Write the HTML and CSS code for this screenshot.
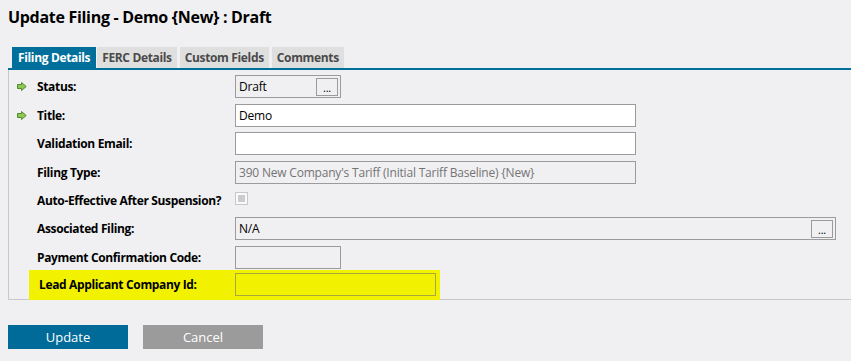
FILE: index.html
```html
<!DOCTYPE html>
<html>
<head>
<meta charset="UTF-8">
<title>Update Filing</title>
<link rel="stylesheet" href="styles.css">
</head>
<body>
	<h1 class="pageTitle">Update Filing - Demo {New} : Draft</h1>

	<div class="tabs">
		<span class="tab active">Filing Details</span>
		<span class="tab">FERC Details</span>
		<span class="tab">Custom Fields</span>
		<span class="tab">Comments</span>
	</div>

	<div class="panel">
		<div class="row">
			<span class="req"><svg width="10" height="9" viewBox="0 0 10 9"><path d="M0.5 2.5 H4.5 V0.5 L9.2 4.5 L4.5 8.5 V6.5 H0.5 Z" fill="#8fc850" stroke="#4f8a2c" stroke-width="1"/></svg></span>
			<label class="lbl">Status:</label>
			<div class="box small"><span class="val">Draft</span><span class="dots">...</span></div>
		</div>
		<div class="row">
			<span class="req"><svg width="10" height="9" viewBox="0 0 10 9"><path d="M0.5 2.5 H4.5 V0.5 L9.2 4.5 L4.5 8.5 V6.5 H0.5 Z" fill="#8fc850" stroke="#4f8a2c" stroke-width="1"/></svg></span>
			<label class="lbl">Title:</label>
			<div class="box wide white"><span class="val">Demo</span></div>
		</div>
		<div class="row">
			<span class="req"></span>
			<label class="lbl">Validation Email:</label>
			<div class="box wide white"></div>
		</div>
		<div class="row">
			<span class="req"></span>
			<label class="lbl">Filing Type:</label>
			<div class="box wide disabled"><span class="val">390 New Company's Tariff (Initial Tariff Baseline) {New}</span></div>
		</div>
		<div class="row">
			<span class="req"></span>
			<label class="lbl">Auto-Effective After Suspension?</label>
			<span class="check"></span>
		</div>
		<div class="row">
			<span class="req"></span>
			<label class="lbl">Associated Filing:</label>
			<div class="box full"><span class="val">N/A</span><span class="dots">...</span></div>
		</div>
		<div class="row">
			<span class="req"></span>
			<label class="lbl">Payment Confirmation Code:</label>
			<div class="box small"></div>
		</div>
		<div class="row marked">
			<label class="lbl">Lead Applicant Company Id:</label>
			<div class="box mid"></div>
		</div>
	</div>

	<div class="actions">
		<button class="btn primary">Update</button>
		<button class="btn grey">Cancel</button>
	</div>
</body>
</html>
```

FILE: styles.css
```css
body {
	margin: 0 0 0 8px;
	background: #f0f0f2;
	font-family: "Open Sans", "Noto Sans", sans-serif;
	font-size: 12px;
	color: #000;
	overflow: hidden;
}

.pageTitle {
	margin: 0;
	padding-top: 6px;
	height: 41px;
	font-size: 16px;
	font-weight: bold;
	letter-spacing: -0.3px;
}

.tabs {
	display: flex;
	gap: 3px;
	padding-left: 4px;
	border-bottom: 2px solid #006f9b;
	height: 21px;
	align-items: flex-end;
}

.tab {
	background: #dfdfdf;
	color: #4a4a4a;
	font-weight: bold;
	height: 21px;
	line-height: 22px;
	padding: 0 5px;
	letter-spacing: -0.35px;
}

.tab.active {
	background: #006f9b;
	color: #fff;
	padding: 0 6px;
	margin-right: -2px;
}

.panel {
	border-left: 1px solid #c9c9c9;
	border-bottom: 1px solid #c9c9c9;
	padding-top: 2.8px;
	height: 226px;
}

.row {
	display: flex;
	align-items: center;
	height: 28.4px;
}

.req {
	width: 28px;
	display: flex;
	justify-content: flex-end;
	box-sizing: border-box;
	padding-left: 8px;
}

.req svg {
	margin-right: 10px;
}

.lbl {
	width: 198px;
	font-weight: bold;
	letter-spacing: -0.35px;
}

.box {
	box-sizing: border-box;
	height: 23px;
	border: 1px solid #9b9b9b;
	display: flex;
	align-items: center;
	padding-left: 3px;
	letter-spacing: -0.2px;
}

.box.small { width: 106px; }
.box.wide { width: 401px; }
.box.full { width: 601px; }
.box.mid { width: 201px; border-color: #a8a83a; }

.box.white { background: #fff; }
.box.disabled { color: #747474; }

.val {
	flex: 1;
}

.dots {
	box-sizing: border-box;
	width: 22px;
	height: 18px;
	border: 1px solid #9b9b9b;
	margin-right: 2px;
	text-align: center;
	line-height: 17px;
	font-size: 11px;
}

.check {
	box-sizing: border-box;
	width: 13px;
	height: 13px;
	border: 1px solid #c8c8c8;
	background: #fafafa;
	display: flex;
	align-items: center;
	justify-content: center;
	margin-top: -4px;
}

.check::after {
	content: "";
	width: 7px;
	height: 7px;
	background: #cccccc;
}

.row.marked {
	background: #f2f200;
	margin-left: 20px;
	width: 411px;
	height: 30px;
	margin-top: -1.6px;
	padding-left: 10px;
	box-sizing: border-box;
}

.row.marked .lbl {
	width: 196px;
}

.actions {
	display: flex;
	gap: 15px;
	margin-top: 25px;
}

.btn {
	width: 120px;
	height: 24px;
	border: none;
	color: #fff;
	font-family: "Open Sans", "Noto Sans", sans-serif;
	font-size: 13px;
	padding: 0;
}

.btn.primary { background: #006b98; }
.btn.grey { background: #9b9b9b; }
```
